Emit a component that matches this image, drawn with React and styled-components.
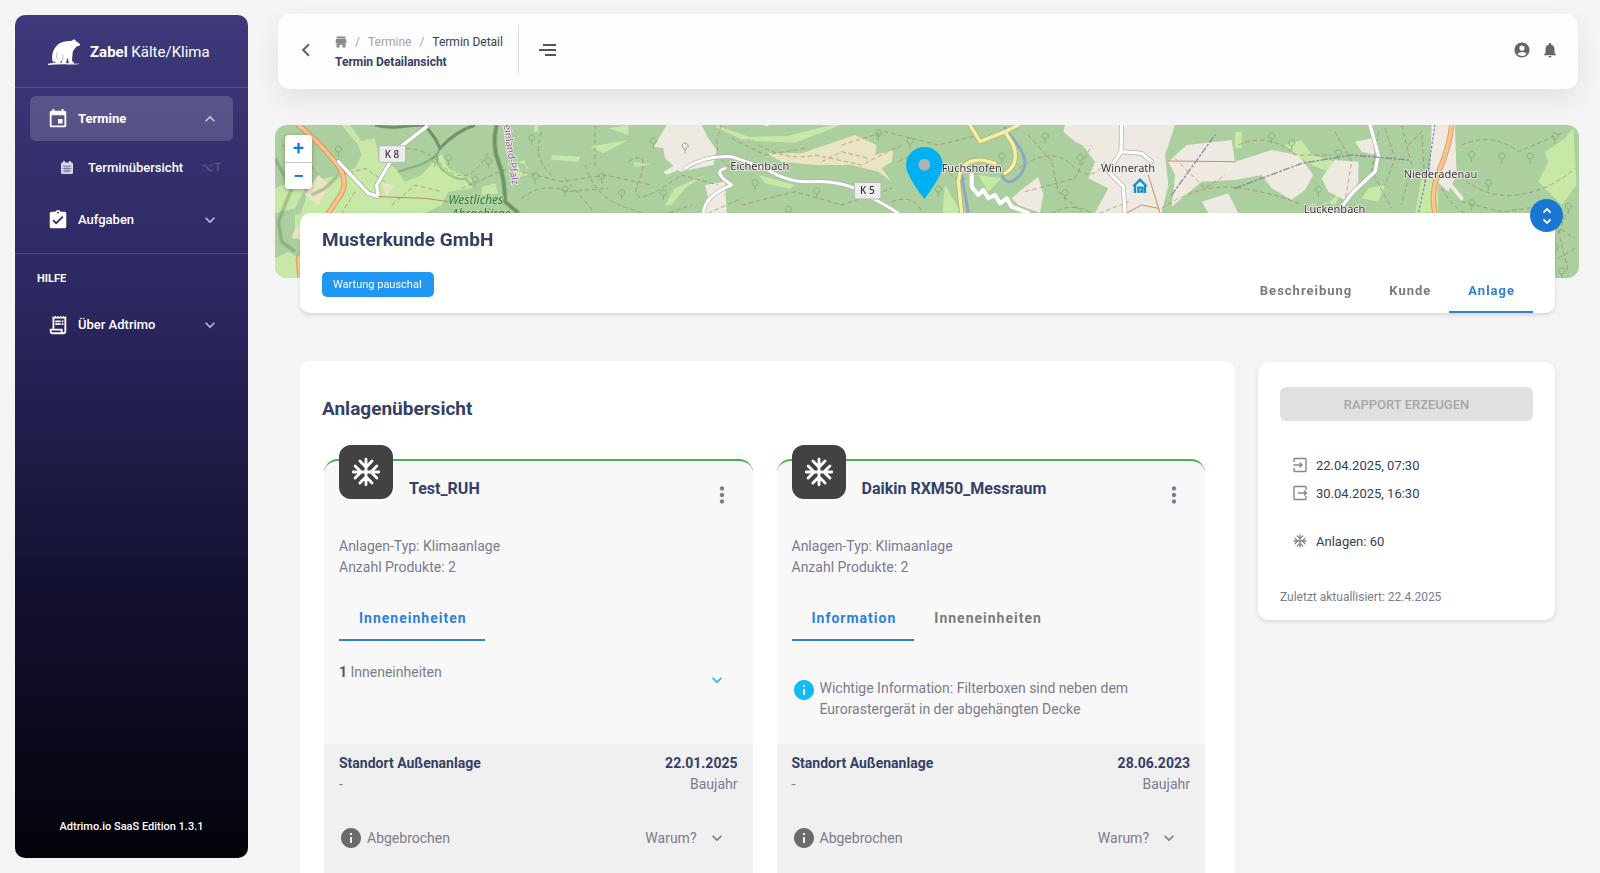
import React from "react"
import styled, { createGlobalStyle } from "styled-components"
import {
  MdAccountCircle,
  MdAssignmentTurnedIn,
  MdChevronLeft,
  MdEvent,
  MdExpandLess,
  MdExpandMore,
  MdInfo,
  MdMoreVert,
  MdNotifications,
  MdOutlineReceiptLong,
  MdUnfoldMore,
} from "react-icons/md"

const systems = [
  {
    name: "Test_RUH",
    type: "Klimaanlage",
    products: 2,
    tabs: ["Inneneinheiten"],
    units: 1,
    built: "22.01.2025",
  },
  {
    name: "Daikin RXM50_Messraum",
    type: "Klimaanlage",
    products: 2,
    tabs: ["Information", "Inneneinheiten"],
    info: "Wichtige Information: Filterboxen sind neben dem Eurorastergerät in der abgehängten Decke",
    built: "28.06.2023",
  },
]

const App = () => (
  <>
    <GlobalStyle />
    <Shell>
      <Sidebar />
      <Main>
        <Topbar />
        <MapView />
        <CustomerCard />
        <Columns>
          <Overview>
            <Heading>Anlagenübersicht</Heading>
            <CardGrid>
              {systems.map(system => (
                <SystemCard key={system.name} {...system} />
              ))}
            </CardGrid>
          </Overview>
          <Summary />
        </Columns>
      </Main>
    </Shell>
  </>
)

const Sidebar = () => (
  <SidebarGroup>
    <Brand href="#">
      <BearLogo />
      <span>
        <strong>Zabel</strong> Kälte/Klima
      </span>
    </Brand>
    <Nav>
      <NavItem active>
        <MdEvent size={22} />
        <NavLabel>Termine</NavLabel>
        <MdExpandLess size={20} />
      </NavItem>
      <SubItem href="#">
        <CalendarIcon />
        <NavLabel>Terminübersicht</NavLabel>
        <Shortcut>⌥T</Shortcut>
      </SubItem>
      <NavItem>
        <MdAssignmentTurnedIn size={22} />
        <NavLabel>Aufgaben</NavLabel>
        <MdExpandMore size={20} />
      </NavItem>
    </Nav>
    <NavTitle>HILFE</NavTitle>
    <NavHelp>
      <NavItem>
        <MdOutlineReceiptLong size={22} />
        <NavLabel>Über Adtrimo</NavLabel>
        <MdExpandMore size={20} />
      </NavItem>
    </NavHelp>
    <Version>Adtrimo.io SaaS Edition 1.3.1</Version>
  </SidebarGroup>
)

const Topbar = () => (
  <TopbarGroup>
    <IconButton aria-label="Zurück">
      <MdChevronLeft size={26} />
    </IconButton>
    <Crumbs>
      <CrumbList>
        <CrumbLink href="#" aria-label="Start">
          <StoreIcon />
        </CrumbLink>
        <span>/</span>
        <CrumbLink href="#">Termine</CrumbLink>
        <span>/</span>
        <CrumbCurrent>Termin Detail</CrumbCurrent>
      </CrumbList>
      <PageTitle>Termin Detailansicht</PageTitle>
    </Crumbs>
    <IconButton aria-label="Menü">
      <MenuIcon />
    </IconButton>
    <TopActions>
      <IconButton aria-label="Konto">
        <MdAccountCircle size={18} />
      </IconButton>
      <IconButton aria-label="Benachrichtigungen">
        <MdNotifications size={18} />
      </IconButton>
    </TopActions>
  </TopbarGroup>
)

const CustomerCard = () => (
  <Customer>
    <Toggle aria-label="Karte umschalten">
      <MdUnfoldMore size={22} />
    </Toggle>
    <CustomerInfo>
      <Heading>Musterkunde GmbH</Heading>
      <Chip>Wartung pauschal</Chip>
    </CustomerInfo>
    <CustomerTabs>
      <MainTab>Beschreibung</MainTab>
      <MainTab>Kunde</MainTab>
      <MainTab active>Anlage</MainTab>
    </CustomerTabs>
  </Customer>
)

const SystemCard = ({ name, type, products, tabs, units, info, built }) => (
  <Card>
    <CardHead>
      <Avatar>
        <SnowIcon size={34} />
      </Avatar>
      <CardTitle>{name}</CardTitle>
      <IconButton aria-label="Mehr">
        <MdMoreVert size={26} />
      </IconButton>
    </CardHead>
    <CardBody>
      <p>Anlagen-Typ: {type}</p>
      <p>Anzahl Produkte: {products}</p>
      <CardTabs>
        {tabs.map((tab, i) => (
          <Tab key={tab} active={i === 0}>
            {tab}
          </Tab>
        ))}
      </CardTabs>
      {units && (
        <UnitRow>
          <p>
            <b>{units}</b> Inneneinheiten
          </p>
          <ExpandButton aria-label="Inneneinheiten anzeigen">
            <MdExpandMore size={20} />
          </ExpandButton>
        </UnitRow>
      )}
      {info && (
        <InfoRow>
          <MdInfo size={24} color="#0fbcf9" />
          <p>{info}</p>
        </InfoRow>
      )}
    </CardBody>
    <CardFoot>
      <FootRow>
        <strong>Standort Außenanlage</strong>
        <strong>{built}</strong>
      </FootRow>
      <FootRow>
        <span>-</span>
        <span>Baujahr</span>
      </FootRow>
      <StatusRow>
        <MdInfo size={24} color="#6b6b6b" />
        <span>Abgebrochen</span>
        <WhyButton>
          Warum?
          <MdExpandMore size={20} />
        </WhyButton>
      </StatusRow>
    </CardFoot>
  </Card>
)

const Summary = () => (
  <SummaryGroup>
    <ReportButton disabled>RAPPORT ERZEUGEN</ReportButton>
    <Facts>
      <Fact>
        <BoxArrow d="M2 5V2.500Q2 1.500 3 1.500H13Q14 1.500 14 2.500V13.500Q14 14.500 13 14.500H3Q2 14.500 2 13.500V11M1.500 8H10M7.500 5.500L10 8L7.500 10.500" />
        22.04.2025, 07:30
      </Fact>
      <Fact>
        <BoxArrow d="M14 5V2.500Q14 1.500 13 1.500H3Q2 1.500 2 2.500V13.500Q2 14.500 3 14.500H13Q14 14.500 14 13.500V11M6 8H14.500M12 5.500L14.500 8L12 10.500" />
        30.04.2025, 16:30
      </Fact>
    </Facts>
    <Fact>
      <SnowIcon size={16} />
      Anlagen: 60
    </Fact>
    <Updated>Zuletzt aktuallisiert: 22.4.2025</Updated>
  </SummaryGroup>
)

/* Icons */

const BearLogo = () => (
  <svg width="32" height="26" viewBox="0 0 96 78" fill="#fff">
    <path d="M16 72C9 58 12 34 26 20C34 11 44 8 56 7L72 5C76 0 82 1 83 5C88 8 92 12 96 15C97 20 91 22 86 22C82 28 77 33 74 39C74 50 71 61 73 67L78 71V74H62L60 56L56 64L54 74H42L40 62L36 74H25L18 66Z" />
    <path d="M0 74Q20 70 48 72T96 74Q80 78 50 76Q18 76 0 78Z" />
    <path d="M28 40Q23 52 28 62M43 46Q47 54 44 64" fill="none" stroke="#39346f" strokeWidth="1" />
  </svg>
)

const CalendarIcon = () => (
  <svg width="12" height="13" viewBox="0 0 24 26">
    <path d="M4 0h4v3h8V0h4v3h1q3 0 3 3v17q0 3-3 3H3q-3 0-3-3V6q0-3 3-3h1z" fill="#d9d8ea" />
    <path d="M3 10h18M3 15h18M3 20h18M8 10v13M12 10v13M16 10v13" stroke="#47437c" strokeWidth="1" />
  </svg>
)

const StoreIcon = () => (
  <svg width="12" height="12" viewBox="0 0 24 24" fill="#8a8a8a">
    <path d="M3 1h18v4H3zM2 6h20l1 7q-2 3-5 1q-3 2-6 0q-3 2-6 0q-3 2-5-1zM3 15h18v8h-6v-5H9v5H3z" />
  </svg>
)

const MenuIcon = () => (
  <svg width="18" height="14" viewBox="0 0 18 14" fill="none" stroke="#555" strokeWidth="2">
    <path d="M4 2H17M0 7H17M6 12H17" />
  </svg>
)

const SnowIcon = ({ size }) => (
  <svg width={size} height={size} viewBox="0 0 24 24" fill="none" stroke="currentColor" strokeWidth="2" strokeLinecap="round" strokeLinejoin="round">
    <path d="M3 12H21M12 3V21M19.700 7.700L15.400 12L19.700 16.300M4.300 7.700L8.600 12L4.300 16.300M7.700 4.300L12 8.600L16.300 4.300M7.700 19.700L12 15.400L16.300 19.700" />
  </svg>
)

const BoxArrow = ({ d }) => (
  <svg width="16" height="16" viewBox="0 0 16 16" fill="none" stroke="currentColor" strokeWidth="1.400">
    <path d={d} />
  </svg>
)

/* Map */

const trails = [
  "M330 90Q420 40 500 120T640 80",
  "M560 190L700 130L860 170L990 150L1130 180",
  "M930 120Q960 220 1060 250T1180 330L1290 420",
  "M720 420Q800 300 900 280T1080 300L1250 240",
  "M640 250L760 330L800 450",
  "M740 220Q800 170 880 200L1000 190M870 160L960 264",
  "M960 0V130M800 20Q770 100 830 150",
  "M1060 110Q1130 70 1090 170T1220 150L1330 180",
  "M1340 0Q1300 90 1370 130",
  "M20 60L80 90L130 150M200 150L270 130L330 170M240 200L200 264M350 240L420 180L500 200",
  "M1100 400L1220 300L1400 220",
  "M1450 60Q1540 110 1620 90L1760 120L1880 60",
  "M1400 240L1560 200L1700 240L1850 190",
  "M1370 40L1470 90L1590 70M1640 110L1700 80L1780 100",
  "M1700 60L1830 20L1990 60L2110 30",
  "M1870 110Q1960 60 2010 130T2130 120",
  "M1850 230Q1930 200 1950 290T2060 260",
  "M2230 130Q2330 60 2390 120T2490 110",
  "M2260 30L2330 110L2350 200L2420 260",
  "M2310 280Q2380 220 2460 270L2560 230",
  "M2250 200L2400 160L2450 60",
  "M2660 250Q2780 170 2900 190T3080 240",
  "M2890 60Q2980 20 3060 90L3170 90",
  "M2700 100L2790 190L2850 150",
  "M3180 20L3230 110L3210 230L3300 300",
  "M3310 20L3290 140L3350 250",
  "M3330 10L3360 100L3330 180M3380 0L3410 120L3380 240",
  "M3400 60L3440 20L3450 180",
  "M3560 60Q3650 20 3730 80L3870 20",
  "M3540 140Q3620 220 3720 210T3900 130",
  "M3560 230L3680 260L3830 240L3880 440",
  "M3500 190Q3560 300 3670 270",
  "M3840 300L3900 340M3850 400L3900 370M3870 270L3850 330",
]

const trees = [
  [190, 70], [1230, 60], [770, 35], [640, 105], [480, 100], [600, 160], [780, 150],
  [870, 190], [980, 150], [1040, 200], [1135, 45], [520, 95], [1165, 200],
  [1440, 170], [1625, 195], [1810, 20], [1905, 45], [1540, 250], [1990, 190],
  [2310, 30], [2415, 95], [2370, 200], [2180, 90], [3050, 50], [3190, 80],
  [3590, 85], [3680, 90], [3765, 90], [3840, 30], [3640, 170], [3590, 230], [3840, 365],
  [3880, 240], [3860, 435], [3130, 190], [2990, 30],
]

const MapView = () => (
  <MapFrame>
    <svg viewBox="0 0 3912 459" preserveAspectRatio="xMidYMid slice">
      <rect width="3912" height="459" fill="#abcf9e" />
      <g fill="#c8e8a6">
        <path d="M245 50L300 40L310 90L360 130L390 170L440 150L500 85L520 130L590 165L590 190L520 200L500 240L450 264H200L120 459H60L90 330L75 270L100 200L150 160L190 150L240 130L260 90Z" />
        <path d="M200 0H225L260 50L245 55ZM60 270L90 264V350L60 340ZM0 400L40 380L75 400V459H0Z" />
        <path d="M0 190L50 170L80 130L110 150L60 250L0 264ZM720 105L745 150L760 125L720 105ZM715 115L750 105L758 150L720 160Z" />
        <path d="M830 90L915 95L910 110L830 104ZM945 65L1060 45L985 85ZM620 185L660 175L670 205L620 210ZM780 0H790V20H775Z" />
        <path d="M1000 10L1060 0L1060 30ZM1075 110L1130 118L1080 125Z" />
        <path d="M1325 5L1400 40L1540 35L1660 5L1690 0L1560 50L1440 45Z" stroke="#c8e8a6" strokeWidth="6" />
        <path d="M1170 240L1200 190L1290 150L1230 190L1190 240ZM1450 150L1560 180L1545 192L1470 175Z" />
        <path d="M2110 150L2180 160L2140 200ZM2010 180L2050 250L2050 290L2000 290Z" />
        <path d="M2880 20H2900V70H2880ZM3030 60L3080 45L3110 90L3180 110L3160 140L3110 120L3080 100Z" />
        <path d="M3280 190L3330 180L3310 230L3260 220ZM3150 240L3200 200L3180 240L3150 230Z" />
        <path d="M3440 160L3490 150L3490 260L3420 265Z" />
        <path d="M3870 40L3895 10L3905 180L3860 240L3790 170L3820 110L3810 80Z" />
      </g>
      <g fill="#e9e4c4">
        <path d="M1475 85L1580 85L1740 30L1805 60L1800 90L1855 75L1850 110L1820 130L1850 170L1810 140L1730 120L1620 120L1520 110Z" />
        <path d="M130 150L165 180L130 240L90 210ZM320 175L360 180L335 215ZM60 310L80 300L75 340H50Z" />
      </g>
      <g fill="#eee9e1">
        <path d="M1175 0H1280L1300 40L1325 75L1315 120L1215 140L1170 100L1165 70L1137 65Z" />
        <path d="M1165 140L1200 120L1210 135L1175 150ZM1290 180L1350 170L1355 264H1280L1300 220Z" />
        <path d="M2245 190L2290 155L2305 210L2295 264L2230 240L2210 220ZM2370 0H2480V60L2440 70L2400 50L2365 20Z" />
        <path d="M2415 0H2700L2670 90L2680 180L2660 264H2460L2500 190L2440 160L2460 110L2415 50Z" />
        <path d="M2735 60L2870 45L2880 110L2990 75L3070 90L3115 150L3090 195L3050 225L2990 190L2960 150L2880 165L2780 170L2690 245L2700 150L2680 110Z" />
        <path d="M3140 160L3180 105L3250 110L3250 170L3220 230L3160 200ZM2780 230L2860 205L2890 264H2800ZM3240 50L3290 40L3300 90L3260 80Z" />
        <path d="M3470 0H3540L3545 150L3520 200L3465 150ZM1460 0H1480V5Z" />
      </g>
      <g fill="none" stroke="#a8775a" strokeWidth="3" strokeDasharray="14 8" opacity=".6">
        {trails.map(d => (
          <path key={d} d={d} />
        ))}
      </g>
      <g fill="none" stroke="#86b27f" strokeWidth="3">
        {trees.map(([x, y], i) => (
          <path key={i} d={`M${x} ${y + 26}V${y + 12}a9 9 0 1 1 1 0`} />
        ))}
      </g>
      <g fill="none" stroke="#5e7f59" opacity=".75">
        <path d="M300 0Q340 10 380 5T450 0L480 40L495 70Q540 20 600 0" strokeWidth="9" />
        <path d="M495 70Q480 110 400 130L370 140M495 70Q470 110 510 140T570 160L590 180" strokeWidth="7" opacity=".5" />
        <path d="M665 0Q650 60 670 110T690 230L730 264" strokeWidth="12" />
        <path d="M0 100Q20 140 50 190L10 290L20 350L60 380M190 150L150 190L110 210" strokeWidth="10" opacity=".5" />
      </g>
      <g fill="none" strokeLinecap="round" strokeLinejoin="round">
        <path d="M70 0Q130 50 180 110T190 220L70 400L75 459" stroke="#d59a66" strokeWidth="16" />
        <path d="M70 0Q130 50 180 110T190 220L70 400L75 459" stroke="#fbc48a" strokeWidth="10" />
        <path d="M190 110L280 205L310 215L305 180L370 70L455 5" stroke="#a9a9a9" strokeWidth="14" />
        <path d="M190 110L280 205L310 215L305 180L370 70L455 5" stroke="#fff" strokeWidth="10" />
        <path d="M310 215L450 220L560 235" stroke="#b98b62" strokeWidth="3" />
        <path d="M1230 130Q1290 90 1370 95L1470 130Q1540 175 1610 170T1740 190L1830 240L1870 264M1350 130Q1310 140 1370 180Q1290 210 1285 264" stroke="#b4afb0" strokeWidth="13" />
        <path d="M1230 130Q1290 90 1370 95L1470 130Q1540 175 1610 170T1740 190L1830 240L1870 264M1350 130Q1310 140 1370 180Q1290 210 1285 264" stroke="#fff" strokeWidth="9" />
        <path d="M2090 150V185L2110 210L2125 195L2140 220L2160 210L2175 235L2195 220L2210 245L2260 264" stroke="#fff" strokeWidth="12" />
        <path d="M2190 10L2220 50Q2270 110 2235 150T2180 150M2060 150L2080 264" stroke="#8ea5c8" strokeWidth="9" strokeDasharray="7 6" />
        <path d="M2085 0L2115 50L2190 20L2215 60Q2235 120 2190 145M2190 20L2230 0M2160 115Q2060 80 2050 170L2060 264" stroke="#b8b37a" strokeWidth="15" />
        <path d="M2085 0L2115 50L2190 20L2215 60Q2235 120 2190 145M2190 20L2230 0M2160 115Q2060 80 2050 170L2060 264" stroke="#f6f1a4" strokeWidth="10" />
        <path d="M2540 0L2538 80L2500 140L2545 185L2550 264M2538 80L2600 85L2630 110M3285 0L3310 90L3300 140L3235 200L3200 245" stroke="#b4afb0" strokeWidth="14" />
        <path d="M2540 0L2538 80L2500 140L2545 185L2550 264M2538 80L2600 85L2630 110M3285 0L3310 90L3300 140L3235 200L3200 245" stroke="#fff" strokeWidth="10" />
        <path d="M3510 160L3560 220" stroke="#eee9e1" strokeWidth="12" />
        <path d="M3530 0Q3525 60 3495 130T3480 264" stroke="#d59a66" strokeWidth="16" />
        <path d="M3530 0Q3525 60 3495 130T3480 264" stroke="#fbc48a" strokeWidth="11" />
        <path d="M3480 0L3460 130L3430 264" stroke="#7d7fd0" strokeWidth="4" strokeDasharray="4 9" />
        <path d="M2690 210L2820 30M2880 190L3080 115L3230 90L3400 105" stroke="#8d86a5" strokeWidth="4" strokeDasharray="18 8 5 8" />
        <path d="M2680 108L2880 110M2620 150L2655 264M2555 264L2600 240L2650 250" stroke="#cf8c62" strokeWidth="3" />
      </g>
      <RoadSign x="312" y="62" text="K 8" />
      <RoadSign x="1738" y="172" text="K 5" />
      <MapLabel x="1366" y="134">Eichenbach</MapLabel>
      <MapLabel x="2000" y="142">Fuchshofen</MapLabel>
      <MapLabel x="2478" y="140">Winnerath</MapLabel>
      <MapLabel x="3386" y="159">Niederadenau</MapLabel>
      <MapLabel x="3086" y="264">Lückenbach</MapLabel>
      <ForestLabel x="520" y="238">Westliches</ForestLabel>
      <ForestLabel x="530" y="280">Ahrgebirge</ForestLabel>
      <BorderLabel transform="translate(686 0) rotate(82)">einland-Pfalz</BorderLabel>
      <path d="M2575 184L2595 164L2615 184M2580 180V204M2610 180V204M2590 204V188H2602V200H2594" fill="none" stroke="#1492cf" strokeWidth="7" />
      <path d="M1948 222Q1893 150 1893 120A55 54 0 0 1 2003 120Q2003 150 1948 222Z" fill="#00b0f0" />
      <circle cx="1948" cy="119" r="18" fill="#aab4b4" />
    </svg>
    <ZoomControl>
      <button aria-label="Vergrößern">+</button>
      <button aria-label="Verkleinern">−</button>
    </ZoomControl>
  </MapFrame>
)

const RoadSign = ({ x, y, text }) => (
  <g transform={`translate(${x} ${y})`}>
    <rect width="80" height="50" rx="6" fill="#eeeded" stroke="#b9b6b9" strokeWidth="3" />
    <MapLabel x="17" y="36" small>
      {text}
    </MapLabel>
  </g>
)

const GlobalStyle = createGlobalStyle`
  * {
    box-sizing: border-box;
  }
  body {
    margin: 0;
    background: #f4f4f4;
    color: #7b7b8f;
    font: 14px/21px Roboto, "Liberation Sans", sans-serif;
  }
  p, h1, h2, h3 {
    margin: 0;
  }
  button {
    border: 0;
    padding: 0;
    background: none;
    font: inherit;
    color: inherit;
    cursor: pointer;
  }
  a {
    color: inherit;
    text-decoration: none;
  }
  svg {
    display: block;
    flex-shrink: 0;
  }
`
const Shell = styled.div`
  display: grid;
  grid-template-columns: 248px minmax(0, 1fr);
  height: 100vh;
`
const SidebarGroup = styled.aside`
  display: flex;
  flex-direction: column;
  margin: 15px 0 15px 15px;
  border-radius: 10px;
  background: linear-gradient(180deg, #3e3a7b 0%, #2c2862 33%, #141233 66%, #03030b 100%);
  color: #fff;
  font-size: 13px;
`
const Brand = styled.a`
  display: flex;
  align-items: center;
  gap: 10px;
  height: 73px;
  padding: 2px 0 0 33px;
  border-bottom: 1px solid rgba(255, 255, 255, 0.15);
  font-size: 15px;
  font-weight: 400;

  strong {
    font-weight: 700;
  }
`
const Nav = styled.nav`
  display: flex;
  flex-direction: column;
  padding: 8px 15px 11px;
  border-bottom: 1px solid rgba(255, 255, 255, 0.15);
`
const NavHelp = styled.nav`
  padding: 13px 15px;
`
const NavItem = styled.button.withConfig({ shouldForwardProp: p => p !== "active" })`
  display: flex;
  align-items: center;
  gap: 9px;
  width: 100%;
  height: 45px;
  padding: 0 13px 0 17px;
  border-radius: 6px;
  background: ${props => (props.active ? "rgba(255, 255, 255, 0.16)" : "none")};
  font-weight: ${props => (props.active ? 700 : 500)};

  svg:last-child {
    opacity: 0.7;
  }
`
const NavLabel = styled.span`
  flex: 1;
  text-align: left;
`
const SubItem = styled.a`
  display: flex;
  align-items: center;
  gap: 15px;
  height: 52px;
  margin-bottom: 4px;
  padding: 0 12px 0 31px;
  font-weight: 500;
`
const Shortcut = styled.span`
  font-size: 11px;
  font-weight: 400;
  opacity: 0.25;
`
const NavTitle = styled.h3`
  padding: 14px 22px 0;
  font-size: 11px;
  font-weight: 700;
`
const Version = styled.p`
  margin-top: auto;
  padding-bottom: 21px;
  text-align: center;
  font-size: 11px;
  font-weight: 500;
`
const Main = styled.main`
  padding: 14px 21px 0 27px;
  overflow-y: auto;
  scrollbar-width: none;
`
const TopbarGroup = styled.header`
  display: flex;
  align-items: center;
  height: 75px;
  margin: 0 1px 36px 3px;
  padding: 0 19px 4px 15px;
  border-radius: 12px;
  background: #fdfdfd;
  box-shadow: 0 10px 24px rgba(0, 0, 0, 0.07);
  color: #666;
`
const IconButton = styled.button`
  display: flex;
  align-items: center;
  justify-content: center;
`
const Crumbs = styled.div`
  margin: 0 20px 0 16px;
  padding: 6px 15px 2px 0;
  border-right: 1px solid #ddd;
`
const CrumbList = styled.div`
  display: flex;
  align-items: center;
  gap: 8px;
  color: #a3a3a8;
  font-size: 12px;
  line-height: 20px;
`
const CrumbLink = styled.a`
  color: #a3a3a8;
`
const CrumbCurrent = styled.span`
  color: #344054;
`
const PageTitle = styled.h1`
  color: #344067;
  font-size: 12px;
  font-weight: 700;
  line-height: 20px;
`
const TopActions = styled.div`
  display: flex;
  gap: 10px;
  margin-left: auto;
`
const MapFrame = styled.div`
  position: relative;
  height: 153px;
  border-radius: 12px;
  overflow: hidden;

  > svg {
    width: 100%;
    height: 100%;
  }
`
const MapLabel = styled.text.withConfig({ shouldForwardProp: p => p !== "small" })`
  fill: #3a3340;
  stroke: #f3f0ea;
  stroke-width: ${props => (props.small ? 0 : 5)};
  paint-order: stroke;
  font: ${props => (props.small ? "500 30px" : "33px")} "Noto Sans", sans-serif;
`
const ForestLabel = styled(MapLabel)`
  fill: #2f7a3f;
  stroke: #b8d8a8;
  font-size: 36px;
  font-style: italic;
`
const BorderLabel = styled(MapLabel)`
  fill: #8a5a96;
  font-size: 30px;
`
const ZoomControl = styled.div`
  position: absolute;
  top: 10px;
  left: 10px;
  width: 27px;
  border-radius: 4px;
  background: #fff;
  box-shadow: 0 1px 4px rgba(0, 0, 0, 0.3);

  button {
    display: block;
    width: 100%;
    height: 27px;
    color: #1976d2;
    font-size: 20px;
    font-weight: 500;
  }
  button + button {
    border-top: 1px solid #ccc;
  }
`
const Customer = styled.section`
  position: relative;
  display: flex;
  justify-content: space-between;
  height: 100px;
  margin: -65px 24px 48px 25px;
  padding: 0 22px;
  border-radius: 10px;
  background: #fff;
  box-shadow: 0 2px 4px rgba(0, 0, 0, 0.12);
`
const Toggle = styled.button`
  position: absolute;
  top: -14px;
  right: -8px;
  display: grid;
  place-items: center;
  width: 33px;
  height: 33px;
  border-radius: 50%;
  background: #1976d2;
  color: #fff;
`
const CustomerInfo = styled.div`
  display: flex;
  flex-direction: column;
  align-items: flex-start;
  gap: 20px;
  padding-top: 15px;
`
const Heading = styled.h2`
  color: #344067;
  font-size: 19px;
  font-weight: 700;
  line-height: 24px;
`
const Chip = styled.span`
  padding: 0 12px 0 11px;
  border-radius: 5px;
  background: #2196f3;
  color: #fff;
  font-size: 11px;
  line-height: 25px;
`
const CustomerTabs = styled.div`
  display: flex;
  align-items: flex-end;
`
const Tab = styled.button.withConfig({ shouldForwardProp: p => p !== "active" })`
  height: 44px;
  padding: 0 18px 0 20px;
  border-bottom: 2px solid ${props => (props.active ? "#2f80d8" : "transparent")};
  color: ${props => (props.active ? "#2f80d8" : "#7b7b7b")};
  font-weight: 700;
  letter-spacing: 1px;
`
const MainTab = styled(Tab)`
  padding: 0 18px 0 19px;
  font-size: 13px;
`
const Columns = styled.div`
  display: grid;
  grid-template-columns: minmax(0, 1fr) 297px;
  align-items: start;
  gap: 23px;
  margin: 0 24px 0 25px;
`
const Overview = styled.section`
  padding: 36px 30px 40px 24px;
  border-radius: 10px;
  background: #fff;

  > h2 {
    margin-left: -2px;
  }
`
const CardGrid = styled.div`
  display: grid;
  grid-template-columns: 1fr 1fr;
  gap: 24px;
  margin-top: 38px;
`
const Card = styled.article`
  display: flex;
  flex-direction: column;
  border-top: 2px solid #4caf50;
  border-radius: 14px;
  background: #f8f8f8;
`
const CardHead = styled.div`
  display: flex;
  align-items: center;
  height: 75px;
  padding: 0 18px 8px 15px;
`
const Avatar = styled.div`
  display: grid;
  place-items: center;
  width: 54px;
  height: 54px;
  margin: -46px 16px 0 0;
  border-radius: 12px;
  background: #424242;
  color: #fff;
`
const CardTitle = styled.h3`
  flex: 1;
  margin-top: -12px;
  color: #344067;
  font-size: 16px;
  font-weight: 700;
`
const CardBody = styled.div`
  flex: 1;
  min-height: 208px;
  padding: 0 15px;
`
const CardTabs = styled.div`
  display: flex;
  margin-top: 19px;
`
const UnitRow = styled.div`
  display: flex;
  justify-content: space-between;
  padding: 21px 11px 0 0;

  b {
    color: #55556b;
  }
`
const ExpandButton = styled.button`
  margin-top: 8px;
  height: 20px;
  color: #1eb4f0;
`
const InfoRow = styled.div`
  display: flex;
  gap: 4px;
  padding: 37px 40px 0 0;
`
const CardFoot = styled.div`
  padding: 9px 15px 40px;
  border-radius: 0 0 14px 14px;
  background: #f0f0f0;
`
const FootRow = styled.div`
  display: flex;
  justify-content: space-between;

  strong {
    color: #344067;
  }
`
const StatusRow = styled.div`
  display: flex;
  align-items: center;
  gap: 4px;
  margin-top: 31px;
`
const WhyButton = styled.button`
  display: flex;
  align-items: center;
  gap: 10px;
  margin: 0 11px 0 auto;
`
const SummaryGroup = styled.aside`
  margin-top: 1px;
  padding: 25px 22px 12px;
  border-radius: 10px;
  background: #fff;
  box-shadow: 0 2px 4px rgba(0, 0, 0, 0.1);
  color: #344054;
  font-size: 13px;
`
const ReportButton = styled.button`
  width: 100%;
  height: 34px;
  margin-bottom: 30px;
  border-radius: 6px;
  background: #e0e0e0;
  color: #a6a6a6;
  font-weight: 500;
`
const Facts = styled.div`
  margin-bottom: 20px;
`
const Fact = styled.p`
  display: flex;
  align-items: center;
  gap: 8px;
  height: 28px;
  padding-left: 12px;

  svg {
    color: #85858f;
  }
`
const Updated = styled.p`
  margin-top: 32px;
  color: #7b7b8f;
  font-size: 12px;
`

export default App
